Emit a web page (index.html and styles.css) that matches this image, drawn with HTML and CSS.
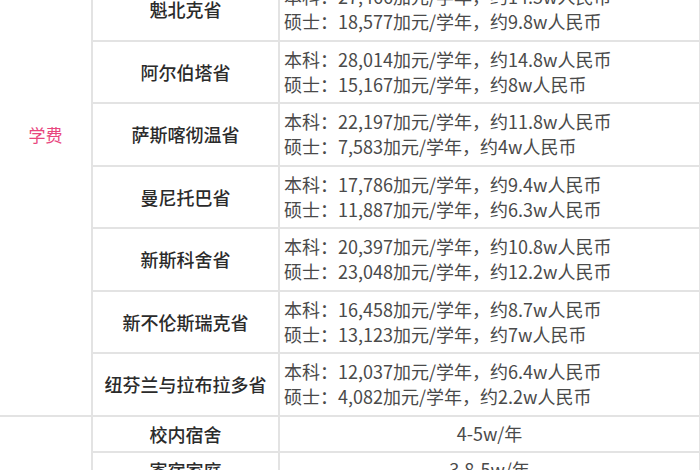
FILE: index.html
```html
<!DOCTYPE html>
<html lang="zh-CN">
<head>
<meta charset="utf-8">
<title>加拿大留学费用</title>
<link rel="stylesheet" href="styles.css">
</head>
<body>
<div class="viewport">
<table class="fees">
  <colgroup>
    <col class="c-cat">
    <col class="c-name">
    <col class="c-val">
  </colgroup>
  <tbody>
    <tr class="prov">
      <td class="cat" rowspan="9">学费</td>
      <td class="name">不列颠哥伦比亚省</td>
      <td class="val">本科：36,552加元/学年，约19.3w人民币<br>硕士：21,374加元/学年，约11.3w人民币</td>
    </tr>
    <tr class="prov">
      <td class="name">安大略省</td>
      <td class="val">本科：38,643加元/学年，约20.4w人民币<br>硕士：31,111加元/学年，约16.4w人民币</td>
    </tr>
    <tr class="prov">
      <td class="name">魁北克省</td>
      <td class="val">本科：27,466加元/学年，约14.5w人民币<br>硕士：18,577加元/学年，约9.8w人民币</td>
    </tr>
    <tr class="prov">
      <td class="name">阿尔伯塔省</td>
      <td class="val">本科：28,014加元/学年，约14.8w人民币<br>硕士：15,167加元/学年，约8w人民币</td>
    </tr>
    <tr class="prov">
      <td class="name">萨斯喀彻温省</td>
      <td class="val">本科：22,197加元/学年，约11.8w人民币<br>硕士：7,583加元/学年，约4w人民币</td>
    </tr>
    <tr class="prov">
      <td class="name">曼尼托巴省</td>
      <td class="val">本科：17,786加元/学年，约9.4w人民币<br>硕士：11,887加元/学年，约6.3w人民币</td>
    </tr>
    <tr class="prov">
      <td class="name">新斯科舍省</td>
      <td class="val">本科：20,397加元/学年，约10.8w人民币<br>硕士：23,048加元/学年，约12.2w人民币</td>
    </tr>
    <tr class="prov">
      <td class="name">新不伦斯瑞克省</td>
      <td class="val">本科：16,458加元/学年，约8.7w人民币<br>硕士：13,123加元/学年，约7w人民币</td>
    </tr>
    <tr class="prov">
      <td class="name">纽芬兰与拉布拉多省</td>
      <td class="val">本科：12,037加元/学年，约6.4w人民币<br>硕士：4,082加元/学年，约2.2w人民币</td>
    </tr>
    <tr class="small">
      <td class="cat cat-low" rowspan="3">住宿</td>
      <td class="name">校内宿舍</td>
      <td class="val center">4-5w/年</td>
    </tr>
    <tr class="small">
      <td class="name">寄宿家庭</td>
      <td class="val center">3.8-5w/年</td>
    </tr>
    <tr class="small">
      <td class="name">校外租房</td>
      <td class="val center">3-6w/年</td>
    </tr>
  </tbody>
</table>
</div>
</body>
</html>
```
FILE: styles.css
```css
html, body {
  margin: 0;
  padding: 0;
  background: #ffffff;
}
body {
  width: 700px;
  height: 470px;
  overflow: hidden;
  font-family: "Noto Sans CJK SC", "Noto Sans", sans-serif;
}
.viewport {
  margin-top: -148px;
}
.fees {
  width: 700px;
  border-collapse: collapse;
  table-layout: fixed;
}
.c-cat { width: 92px; }
.c-name { width: 187px; }
.c-val { width: 421px; }
.fees td {
  border: 2px solid #e3e3e3;
  padding: 0;
}
.fees td.cat {
  border-left: none;
}
.fees td.cat-low {
  padding-top: 16px;
}
.prov { height: 62.5px; }
.small { height: 36px; }
.cat {
  text-align: center;
  vertical-align: middle;
  color: #e8467e;
  font-size: 17px;
}
.name {
  text-align: center;
  vertical-align: middle;
  color: #2b2b2b;
  font-size: 18px;
  font-weight: 500;
}
.val {
  color: #4a4a4a;
  font-size: 18px;
  line-height: 25px;
  padding-left: 4px !important;
  vertical-align: middle;
  white-space: nowrap;
}
.val.center {
  text-align: center;
  padding-left: 0 !important;
}
```
